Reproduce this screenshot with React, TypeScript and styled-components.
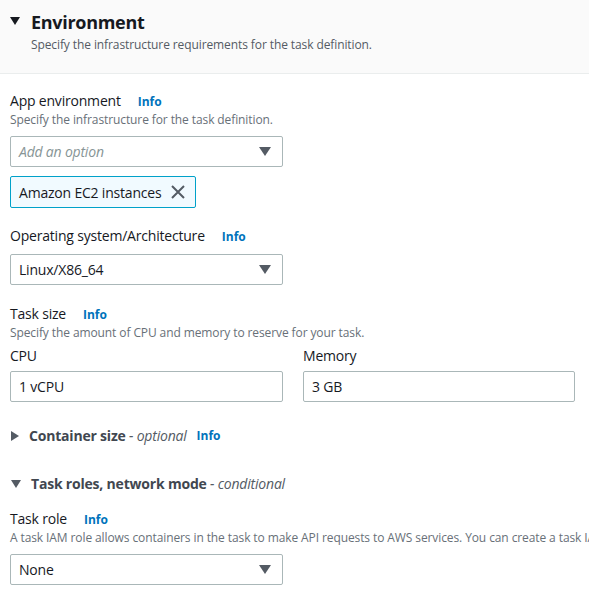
import React from "react";
import styled, { createGlobalStyle } from "styled-components";

const Global = createGlobalStyle`
  html, body { margin: 0; padding: 0; background: #fff; }
  body { font-family: "Open Sans", "Noto Sans", sans-serif; color: #16191f; overflow: hidden; }
  * { box-sizing: border-box; }
`;

const Page = styled.div`
  width: 589px;
  height: 601px;
  overflow: hidden;
`;

const Header = styled.div`
  background: #fafafa;
  border-bottom: 1px solid #eaeded;
  height: 74px;
  padding: 9px 10px 0 10px;
  display: flex;
  align-items: flex-start;
  gap: 11px;
`;

const Caret = styled.span<{ $dir: "down" | "right"; $color?: string; $size?: number }>`
  display: block;
  width: 0;
  height: 0;
  flex: none;
  ${(p) => {
    const s = p.$size ?? 5;
    const c = p.$color || "#16191f";
    return p.$dir === "down"
      ? `border-left: ${s}px solid transparent; border-right: ${s}px solid transparent; border-top: ${Math.round(s * 1.5)}px solid ${c};`
      : `border-top: ${s}px solid transparent; border-bottom: ${s}px solid transparent; border-left: ${Math.round(s * 1.6)}px solid ${c};`;
  }}
`;

const HeaderCaretWrap = styled.div`
  padding-top: 8px;
`;

const Title = styled.h2`
  margin: 0;
  font-size: 18px;
  font-weight: 700;
  line-height: 26px;
  letter-spacing: -0.3px;
`;

const Subtitle = styled.div`
  font-size: 12px;
  line-height: 18px;
  color: #545b64;
  margin-top: 1px;
  letter-spacing: -0.1px;
`;

const Body = styled.div`
  padding: 17px 14px 0 10px;
  display: flex;
  flex-direction: column;
`;

const Field = styled.div<{ $mt?: number }>`
  margin-top: ${(p) => p.$mt ?? 0}px;
  display: flex;
  flex-direction: column;
`;

const LabelRow = styled.div`
  display: flex;
  align-items: baseline;
  gap: 17px;
  font-size: 14px;
  line-height: 20px;
  letter-spacing: -0.2px;
`;

const Info = styled.a`
  font-size: 12px;
  font-weight: 700;
  color: #0073bb;
  text-decoration: none;
  letter-spacing: 0;
`;

const Desc = styled.div`
  font-size: 12px;
  line-height: 16px;
  color: #687078;
  white-space: nowrap;
  letter-spacing: -0.1px;
`;

const Select = styled.div<{ $placeholder?: boolean; $mt?: number }>`
  width: 273px;
  height: 31px;
  margin-top: ${(p) => p.$mt ?? 0}px;
  border: 1px solid #aab7b8;
  border-radius: 2px;
  display: flex;
  align-items: center;
  justify-content: space-between;
  padding: 0 11px 0 8px;
  font-size: 14px;
  letter-spacing: -0.2px;
  color: ${(p) => (p.$placeholder ? "#879596" : "#16191f")};
  font-style: ${(p) => (p.$placeholder ? "italic" : "normal")};
`;

const Token = styled.div`
  margin-top: 9px;
  align-self: flex-start;
  height: 32px;
  border: 1px solid #00a1c9;
  border-radius: 2px;
  background: #f1faff;
  display: flex;
  align-items: center;
  gap: 9px;
  padding: 0 9px 0 8px;
  font-size: 14px;
  letter-spacing: -0.2px;
`;

const Grid = styled.div`
  display: grid;
  grid-template-columns: 273px 272px;
  column-gap: 20px;
  margin-top: 5px;
`;

const Input = styled.div`
  height: 31px;
  margin-top: 5px;
  border: 1px solid #aab7b8;
  border-radius: 2px;
  display: flex;
  align-items: center;
  padding: 0 8px;
  font-size: 14px;
  letter-spacing: -0.2px;
`;

const Expander = styled.div<{ $mt: number }>`
  margin-top: ${(p) => p.$mt}px;
  display: flex;
  align-items: center;
  gap: 10px;
  padding-left: 1px;
  font-size: 14px;
  line-height: 20px;
  letter-spacing: -0.2px;
`;

const ExpTitle = styled.span`
  font-weight: 700;
  color: #414750;
`;

const Opt = styled.span`
  font-style: italic;
  font-weight: 400;
  color: #545b64;
`;

const SelectCaret = () => <Caret $dir="down" $color="#545b64" $size={6} />;

const CloseIcon = () => (
  <svg width="16" height="16" viewBox="0 0 16 16">
    <path d="M2 2 L14 14 M14 2 L2 14" stroke="#545b64" strokeWidth="2" fill="none" />
  </svg>
);

export default function App() {
  return (
    <Page>
      <Global />
      <Header>
        <HeaderCaretWrap>
          <Caret $dir="down" $size={5} />
        </HeaderCaretWrap>
        <div>
          <Title>Environment</Title>
          <Subtitle>Specify the infrastructure requirements for the task definition.</Subtitle>
        </div>
      </Header>
      <Body>
        <Field>
          <LabelRow>
            App environment <Info>Info</Info>
          </LabelRow>
          <Desc>Specify the infrastructure for the task definition.</Desc>
          <Select $placeholder $mt={8}>
            Add an option <SelectCaret />
          </Select>
          <Token>
            Amazon EC2 instances <CloseIcon />
          </Token>
        </Field>
        <Field $mt={18}>
          <LabelRow>
            Operating system/Architecture <Info>Info</Info>
          </LabelRow>
          <Select $mt={7}>
            Linux/X86_64 <SelectCaret />
          </Select>
        </Field>
        <Field $mt={19}>
          <LabelRow>
            Task size <Info>Info</Info>
          </LabelRow>
          <Desc>Specify the amount of CPU and memory to reserve for your task.</Desc>
          <Grid>
            <Field>
              <LabelRow>CPU</LabelRow>
              <Input>1 vCPU</Input>
            </Field>
            <Field>
              <LabelRow>Memory</LabelRow>
              <Input>3 GB</Input>
            </Field>
          </Grid>
        </Field>
        <Expander $mt={24}>
          <Caret $dir="right" $color="#545b64" />
          <span>
            <ExpTitle>Container size</ExpTitle> <Opt>- optional</Opt>
          </span>
          <Info>Info</Info>
        </Expander>
        <Expander $mt={28}>
          <Caret $dir="down" $color="#545b64" />
          <span>
            <ExpTitle>Task roles, network mode</ExpTitle> <Opt>- conditional</Opt>
          </span>
        </Expander>
        <Field $mt={15}>
          <LabelRow>
            Task role <Info>Info</Info>
          </LabelRow>
          <Desc>
            A task IAM role allows containers in the task to make API requests to AWS services. You can create a task IAM role from the IAM console.
          </Desc>
          <Select $mt={8}>
            None <SelectCaret />
          </Select>
        </Field>
      </Body>
    </Page>
  );
}
